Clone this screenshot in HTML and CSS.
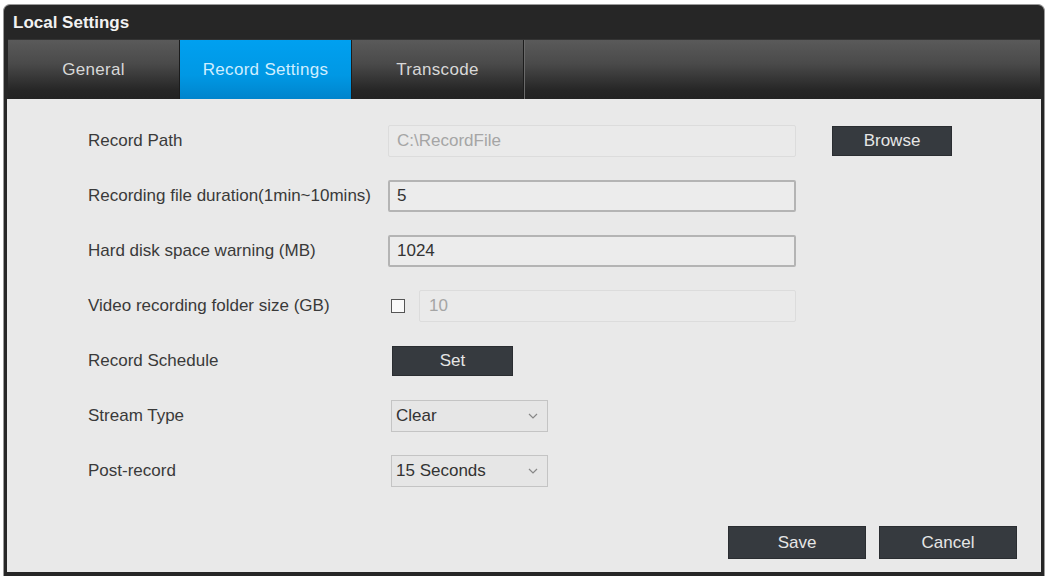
FILE: index.html
```html
<!DOCTYPE html>
<html lang="en">
<head>
    <meta charset="UTF-8">
    <title>Local Settings</title>
    <link rel="stylesheet" href="styles.css">
</head>
<body>
<div class="window">
    <div class="title">Local Settings</div>
    <div class="tabs">
        <div class="tab">General</div>
        <div class="tab active">Record Settings</div>
        <div class="tab">Transcode</div>
        <div class="tab-rest"></div>
    </div>

    <div class="content">
        <div class="row">
            <span class="label">Record Path</span>
            <input class="field disabled" type="text" value="C:\RecordFile" disabled>
            <button class="btn browse">Browse</button>
        </div>
        <div class="row">
            <span class="label">Recording file duration(1min~10mins)</span>
            <input class="field" type="text" value="5">
        </div>
        <div class="row">
            <span class="label">Hard disk space warning (MB)</span>
            <input class="field" type="text" value="1024">
        </div>
        <div class="row">
            <span class="label">Video recording folder size (GB)</span>
            <span class="check"></span>
            <input class="field disabled small" type="text" value="10" disabled>
        </div>
        <div class="row">
            <span class="label">Record Schedule</span>
            <button class="btn set">Set</button>
        </div>
        <div class="row">
            <span class="label">Stream Type</span>
            <div class="select">Clear
                <svg width="10" height="6" viewBox="0 0 10 6"><path d="M1 1 L5 5 L9 1" fill="none" stroke="#888" stroke-width="1.2"/></svg>
            </div>
        </div>
        <div class="row">
            <span class="label">Post-record</span>
            <div class="select">15 Seconds
                <svg width="10" height="6" viewBox="0 0 10 6"><path d="M1 1 L5 5 L9 1" fill="none" stroke="#888" stroke-width="1.2"/></svg>
            </div>
        </div>

        <div class="footer">
            <button class="btn big">Save</button>
            <button class="btn big">Cancel</button>
        </div>
    </div>
</div>
</body>
</html>
```

FILE: styles.css
```css
body {
    margin: 0;
    background: #fff;
    font-family: "Liberation Sans", Arial, sans-serif;
}

.window {
    margin: 4px 3px 0 3px;
    height: 572px;
    background: #262626;
    border-radius: 7px 7px 0 0;
    border: 1px solid #9a9a9a;
    border-bottom: 0;
    padding: 0 3px 4px 3px;
    box-sizing: border-box;
    display: flex;
    flex-direction: column;
}

.title {
    height: 34px;
    line-height: 36px;
    color: #f2f2f2;
    font-weight: bold;
    font-size: 17px;
    padding-left: 6px;
}

.tabs {
    display: flex;
    height: 59px;
    background: linear-gradient(#5a5a5a, #4a4a4a 40%, #262626 85%, #222);
    border-top: 1px solid #333;
    margin: 0 1px;
}

.tab {
    width: 171px;
    color: #d8d8d8;
    font-size: 17px;
    letter-spacing: 0.3px;
    text-align: center;
    line-height: 60px;
    border-right: 1px solid #1c1c1c;
}

.tab.active {
    background: linear-gradient(#00a0f0, #0098e4 60%, #0084cc);
    color: #cfeeff;
}

.tab-rest {
    flex: 1;
    border-left: 1px solid #6a6a6a;
}

.content {
    flex: 1;
    background: #e9e9e9;
    padding: 14px 24px 0 81px;
    display: flex;
    flex-direction: column;
}

.row {
    height: 55px;
    display: flex;
    align-items: center;
}

.label {
    width: 300px;
    color: #3a3a3a;
    font-size: 17px;
}

.field {
    width: 408px;
    height: 32px;
    box-sizing: border-box;
    border: 2px solid #b4b4b4;
    border-radius: 2px;
    background: #ececec;
    font-family: "Liberation Sans", Arial, sans-serif;
    font-size: 17px;
    color: #333;
    padding: 0 7px;
}

.field.disabled {
    border: 1px solid #dcdcdc;
    color: #a5a5a5;
    background: #eaeaea;
    padding: 0 8px;
}

.field.small {
    width: 377px;
    padding: 0 9px;
}

.check {
    width: 12px;
    height: 12px;
    border: 1px solid #555;
    background: #fafafa;
    margin: 0 14px 0 3px;
}

.btn {
    background: #363a3f;
    color: #e6e6e6;
    border: 1px solid #2a2d31;
    font-family: "Liberation Sans", Arial, sans-serif;
    font-size: 17px;
    padding: 0;
}

.browse {
    width: 120px;
    height: 30px;
    margin-left: 36px;
}

.set {
    width: 121px;
    height: 30px;
    margin-left: 4px;
}

.select {
    width: 157px;
    height: 32px;
    box-sizing: border-box;
    margin-left: 3px;
    border: 1px solid #c4c4c4;
    background: #e6e6e6;
    display: flex;
    align-items: center;
    justify-content: space-between;
    padding: 0 9px 0 4px;
    font-size: 17px;
    color: #333;
}

.footer {
    display: flex;
    justify-content: flex-end;
    gap: 13px;
    margin-top: 28px;
}

.btn.big {
    width: 138px;
    height: 33px;
    font-size: 17px;
}
```
